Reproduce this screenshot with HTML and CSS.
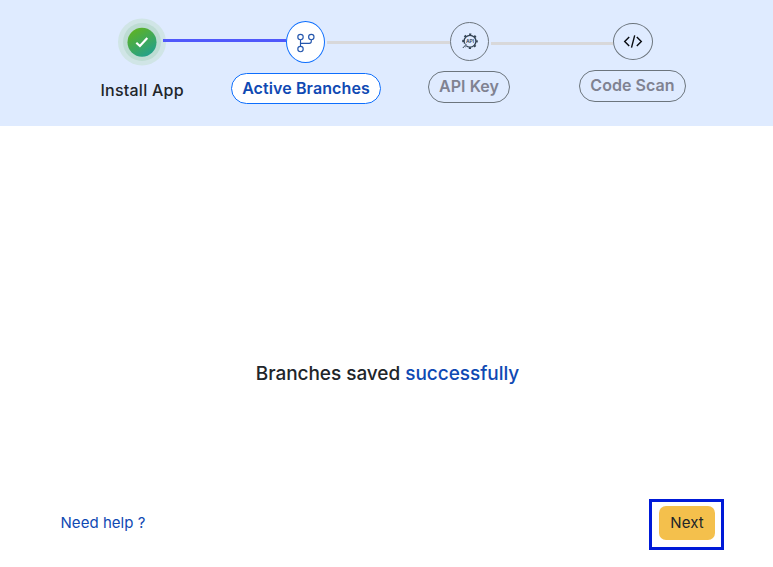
FILE: index.html
```html
<!DOCTYPE html>
<html lang="en">
<head>
<meta charset="utf-8">
<title>Setup</title>
<link rel="stylesheet" href="styles.css">
</head>
<body>
<header class="stepper">
  <div class="track">
    <svg class="done" width="48" height="48" viewBox="0 0 48 48">
      <defs><linearGradient id="g" x1="0.2" y1="0" x2="0.8" y2="1"><stop offset="0" stop-color="#60b320"/><stop offset="1" stop-color="#1f9f91"/></linearGradient></defs>
      <ellipse cx="24" cy="24" rx="24" ry="23.5" fill="#d0e5e6"/>
      <circle cx="24" cy="24" r="19" fill="#bddcd3"/>
      <circle cx="24" cy="24.3" r="14.5" fill="url(#g)"/>
      <path d="M18.3 24.8l3.6 3.2 7.4-8" fill="none" stroke="#fff" stroke-width="2.2"/>
    </svg>
    <span class="line line-done"></span>
    <span class="node node-active">
      <svg class="branch" width="20" height="20" viewBox="0 0 20 20" fill="none" stroke="#2456ad" stroke-width="1.15">
        <circle cx="4.5" cy="4" r="2.7"/><circle cx="15.3" cy="4" r="2.7"/><circle cx="4.5" cy="16" r="2.7"/>
        <path d="M4.5 6.7v6.6M4.5 10.3h8.8q2 0 2-2V6.7"/>
      </svg>
    </span>
    <span class="line line-second"></span>
    <span class="node node-api">
      <svg width="17" height="17" viewBox="0 0 17 17">
        <circle cx="9" cy="8.2" r="5.9" fill="none" stroke="#344454" stroke-width="1.3"/>
        <circle cx="9" cy="8.2" r="6.9" fill="none" stroke="#344454" stroke-width="1.8" stroke-dasharray="2.2 3.219" stroke-dashoffset="1.1"/>
        <path d="M4 8.2h10" stroke="#dfebff" stroke-width="3.6"/>
        <path d="M4.5 11.5l-3 3" stroke="#dfebff" stroke-width="3"/>
        <path d="M5.3 11.3l-3.5 3.7" stroke="#344454" stroke-width="1"/>
        <text class="api-text" x="9" y="10" text-anchor="middle">API</text>
      </svg>
    </span>
    <span class="line line-third"></span>
    <span class="node node-code">
      <svg width="20" height="14" viewBox="0 0 20 14" fill="none" stroke="#080b10" stroke-width="1.4">
        <path d="M6.2 2.9L1.7 7.5l4.5 4.6M13.8 2.9L18.3 7.5l-4.5 4.6M11.7 1.3L8.5 13.7"/>
      </svg>
    </span>
  </div>
  <div class="labels">
    <span class="label-done">Install App</span>
    <span class="pill pill-active">Active Branches</span>
    <span class="pill pill-api">API Key</span>
    <span class="pill pill-code">Code Scan</span>
  </div>
</header>
<main class="content">
  <p class="message">Branches saved <span>successfully</span></p>
</main>
<footer class="actions">
  <a class="help">Need help ?</a>
  <div class="highlight"><button class="next">Next</button></div>
</footer>
</body>
</html>
```
FILE: styles.css
```css
* { box-sizing: border-box; }
body {
  margin: 0;
  height: 567px;
  display: flex;
  flex-direction: column;
  background: #fff;
  color: #212529;
  font-family: Inter, "Liberation Sans", sans-serif;
}
.stepper { height: 126px; background: #dfebff; }
.track {
  display: flex;
  align-items: flex-start;
  height: 70px;
  padding: 18px 0 0 118px;
}
.done { flex: none; }
.line { flex: none; height: 3px; background: #d8d8da; }
.line-done { width: 123px; margin: 21px 0 0 -3px; background: #5058fb; }
.line-second { width: 123px; margin: 23px 0 0 2px; }
.line-third { width: 122px; margin: 24px 0 0 2px; }
.node {
  flex: none;
  display: flex;
  align-items: center;
  justify-content: center;
  border: 1px solid #6c757d;
  border-radius: 50%;
}
.node-active { width: 39px; height: 42px; margin-top: 3px; background: #fff; border-color: #0d6efd; }
.branch { margin-top: 2px; }
.node-api { width: 39px; height: 39px; margin-top: 4px; }
.node-code { width: 40px; height: 37px; margin-top: 5px; }
.node-code svg { margin-bottom: 1px; }
.api-text { font: 600 5px Inter, sans-serif; fill: #344454; }
.labels {
  display: flex;
  align-items: flex-start;
  padding-left: 100px;
  font-size: 16px;
  font-weight: 600;
  white-space: nowrap;
}
.label-done { width: 84px; margin: 10px 47px 0 0; line-height: 20px; font-weight: 500; letter-spacing: 0.25px; text-indent: 0.4px; }
.pill {
  display: flex;
  align-items: center;
  justify-content: center;
  padding-bottom: 2px;
  border: 1px solid #6c757d;
  border-radius: 16px;
  color: #808291;
}
.pill-active { width: 150px; height: 31px; margin-top: 3px; background: #fff; border-color: #0d6efd; color: #0f49b3; letter-spacing: 0.1px; }
.pill-api { width: 82px; height: 32px; margin: 1px 0 0 47px; letter-spacing: 0.05px; }
.pill-code { width: 107px; height: 32px; margin-left: 69px; letter-spacing: 0.05px; }
.content { flex: 1; display: flex; justify-content: center; padding: 236px 0 0 2px; }
.message { margin: 0; font-size: 19px; line-height: 24px; font-weight: 500; letter-spacing: -0.04px; white-space: nowrap; }
.message span { color: #0f49b3; }
.actions {
  display: flex;
  align-items: flex-start;
  justify-content: space-between;
  height: 68px;
  padding: 0 49px 0 60px;
}
.help { margin: 14px 0 0 0.5px; font-size: 15px; line-height: 20px; letter-spacing: 0.04px; color: #0f49b3; }
.highlight { width: 75px; height: 51px; padding: 4px 7px; border: 3px solid #001ad8; }
.next {
  width: 56px;
  height: 34px;
  padding: 0 0 2px;
  border: 0;
  border-radius: 7px;
  background: #f4c04c;
  color: #212529;
  font: 400 15px Inter, sans-serif;
  letter-spacing: 0.1px;
}
```
